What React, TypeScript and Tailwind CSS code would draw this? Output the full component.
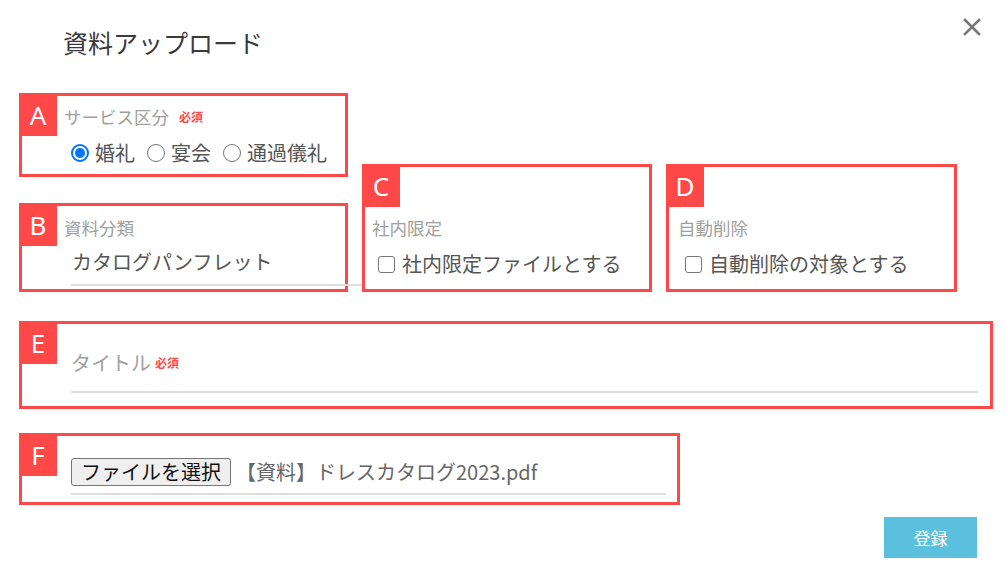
import type { ReactNode } from 'react'

const RED = 'border-[#ff4848]'

function Marked({ mark, className, children }: { mark: string; className: string; children: ReactNode }) {
  return (
    <div className={`relative border-[3px] ${RED} ${className}`}>
      <div className="absolute -left-[3px] -top-[3px] flex h-[43px] w-[38px] items-center justify-center bg-[#ff4848] font-['Noto_Sans',sans-serif] text-[26px] leading-none text-white">
        {mark}
      </div>
      {children}
    </div>
  )
}

function Required() {
  return <span className="text-[12px] font-bold leading-none text-[#ff4848]">必須</span>
}

function Radio({ checked, label }: { checked?: boolean; label: string }) {
  return (
    <label className="flex items-center gap-[6px]">
      {checked ? (
        <span className="flex h-[18px] w-[18px] shrink-0 items-center justify-center rounded-full border-2 border-[#0075ff] bg-white">
          <span className="h-[10px] w-[10px] rounded-full bg-[#0075ff]" />
        </span>
      ) : (
        <span className="h-[18px] w-[18px] shrink-0 rounded-full border-[1.5px] border-[#767676] bg-white" />
      )}
      <span>{label}</span>
    </label>
  )
}

function Checkbox({ label }: { label: string }) {
  return (
    <label className="flex items-center gap-[7px] text-[20px] leading-[28px] text-[#555]">
      <span className="h-[17px] w-[17px] shrink-0 rounded-[3px] border-[1.5px] border-[#767676] bg-white" />
      <span>{label}</span>
    </label>
  )
}

function Underline({ className }: { className: string }) {
  return <div className={`h-[2px] bg-[#dedede] ${className}`} />
}

export default function App() {
  return (
    <div className="h-[569px] w-[1007px] overflow-hidden bg-white font-['Noto_Sans_CJK_JP','Noto_Sans',sans-serif]">
      <div className="flex h-[93px] items-start justify-between pl-[63px] pr-[26px] pt-[18px]">
        <h1 className="mt-[9px] text-[25px] leading-[30px] font-normal text-[#3a3a3a]">資料アップロード</h1>
        <svg width="18" height="18" viewBox="0 0 18 18" className="text-[#777]">
          <path d="M2 2 L16 16 M16 2 L2 16" stroke="currentColor" strokeWidth="2.6" strokeLinecap="square" />
        </svg>
      </div>

      <div className="px-[19px]">
        <div className="flex items-end gap-[14px]">
          <div className="flex w-[329px] flex-col gap-[26px]">
            <Marked mark="A" className="h-[84px]">
              <div className="flex items-center gap-[10px] pl-[42px] pt-[9px] text-[17.5px] leading-[24px] text-[#a0a0a0]">
                サービス区分
                <Required />
              </div>
              <div className="mt-[10px] flex items-center gap-[12px] pl-[49px] text-[20px] leading-[28px] text-[#555]">
                <Radio checked label="婚礼" />
                <Radio label="宴会" />
                <Radio label="通過儀礼" />
              </div>
            </Marked>

            <Marked mark="B" className="h-[89px]">
              <div className="pl-[42px] pt-[10px] text-[17.5px] leading-[24px] text-[#a0a0a0]">資料分類</div>
              <div className="mt-[8px] pl-[50px] text-[20px] leading-[28px] text-[#555]">カタログパンフレット</div>
              <Underline className="ml-[49px] mt-[8px] w-[291px]" />
            </Marked>
          </div>

          <Marked mark="C" className="h-[128px] w-[290px]">
            <div className="pl-[7px] pt-[49px] text-[17.5px] leading-[24px] text-[#a0a0a0]">社内限定</div>
            <div className="mt-[10px] pl-[13px]">
              <Checkbox label="社内限定ファイルとする" />
            </div>
          </Marked>

          <Marked mark="D" className="h-[128px] w-[291px]">
            <div className="pl-[9px] pt-[49px] text-[17.5px] leading-[24px] text-[#a0a0a0]">自動削除</div>
            <div className="mt-[10px] pl-[16px]">
              <Checkbox label="自動削除の対象とする" />
            </div>
          </Marked>
        </div>

        <Marked mark="E" className="mt-[29px] h-[88px] w-[974px]">
          <div className="flex items-center gap-[4px] pl-[49px] pt-[25px] text-[20px] leading-[28px] text-[#a0a0a0]">
            タイトル
            <Required />
          </div>
          <Underline className="ml-[49px] mt-[14px] w-[907px]" />
        </Marked>

        <Marked mark="F" className="mt-[24px] h-[72px] w-[661px]">
          <div className="flex items-center pl-[49px] pt-[22px]">
            <button className="h-[28px] rounded-[3px] border border-[#767676] bg-[#efefef] px-[9px] text-[20px] leading-[26px] text-[#111]">
              ファイルを選択
            </button>
            <span className="ml-[5px] text-[20px] leading-[28px] text-[#666]">【資料】ドレスカタログ2023.pdf</span>
          </div>
          <Underline className="ml-[49px] mt-[7px] w-[595px]" />
        </Marked>

        <div className="mt-[12px] flex justify-end pr-[11px]">
          <button className="h-[41px] w-[93px] bg-[#5bc0de] text-[17px] text-white">登録</button>
        </div>
      </div>
    </div>
  )
}
